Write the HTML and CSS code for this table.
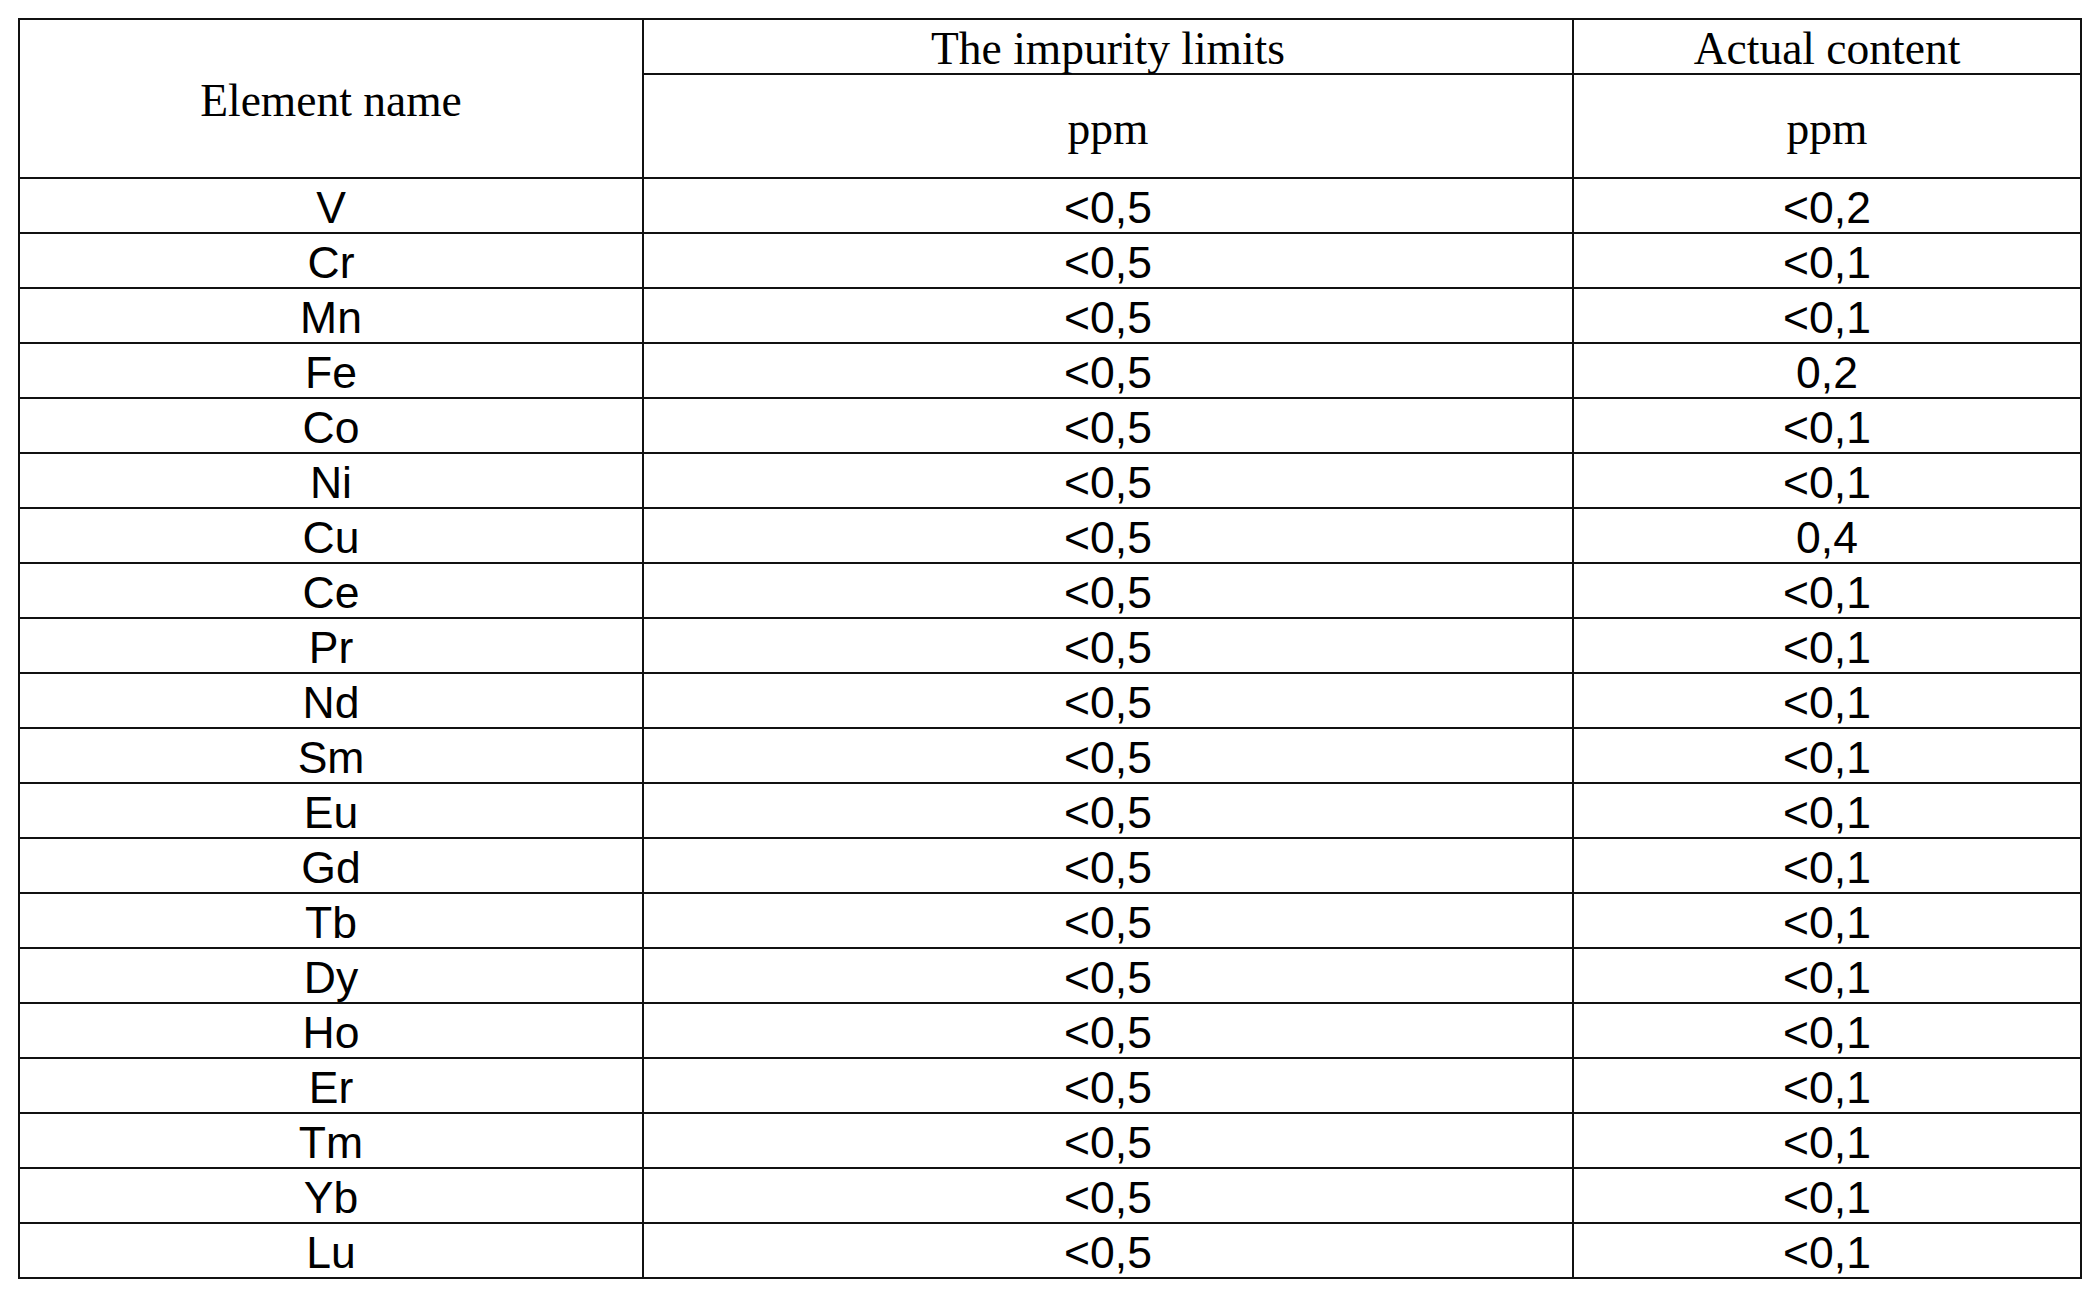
FILE: index.html
```html
<!DOCTYPE html>
<html>
<head>
<meta charset="utf-8">
<link rel="stylesheet" href="styles.css">
</head>
<body>
<table class="spec">
  <thead>
    <tr class="head-top">
      <th class="c1" rowspan="2">Element name</th>
      <th class="c2">The impurity limits</th>
      <th class="c3">Actual content</th>
    </tr>
    <tr class="head-unit">
      <th>ppm</th>
      <th>ppm</th>
    </tr>
  </thead>
  <tbody>
    <tr><td>V</td><td>&lt;0,5</td><td>&lt;0,2</td></tr>
    <tr><td>Cr</td><td>&lt;0,5</td><td>&lt;0,1</td></tr>
    <tr><td>Mn</td><td>&lt;0,5</td><td>&lt;0,1</td></tr>
    <tr><td>Fe</td><td>&lt;0,5</td><td>0,2</td></tr>
    <tr><td>Co</td><td>&lt;0,5</td><td>&lt;0,1</td></tr>
    <tr><td>Ni</td><td>&lt;0,5</td><td>&lt;0,1</td></tr>
    <tr><td>Cu</td><td>&lt;0,5</td><td>0,4</td></tr>
    <tr><td>Ce</td><td>&lt;0,5</td><td>&lt;0,1</td></tr>
    <tr><td>Pr</td><td>&lt;0,5</td><td>&lt;0,1</td></tr>
    <tr><td>Nd</td><td>&lt;0,5</td><td>&lt;0,1</td></tr>
    <tr><td>Sm</td><td>&lt;0,5</td><td>&lt;0,1</td></tr>
    <tr><td>Eu</td><td>&lt;0,5</td><td>&lt;0,1</td></tr>
    <tr><td>Gd</td><td>&lt;0,5</td><td>&lt;0,1</td></tr>
    <tr><td>Tb</td><td>&lt;0,5</td><td>&lt;0,1</td></tr>
    <tr><td>Dy</td><td>&lt;0,5</td><td>&lt;0,1</td></tr>
    <tr><td>Ho</td><td>&lt;0,5</td><td>&lt;0,1</td></tr>
    <tr><td>Er</td><td>&lt;0,5</td><td>&lt;0,1</td></tr>
    <tr><td>Tm</td><td>&lt;0,5</td><td>&lt;0,1</td></tr>
    <tr><td>Yb</td><td>&lt;0,5</td><td>&lt;0,1</td></tr>
    <tr><td>Lu</td><td>&lt;0,5</td><td>&lt;0,1</td></tr>
  </tbody>
</table>
</body>
</html>
```

FILE: styles.css
```css
html, body {
  margin: 0;
  padding: 0;
  background: #ffffff;
}

.spec {
  margin: 18px 0 0 18px;
  width: 2064px;
  border-collapse: separate;
  border-spacing: 0;
  table-layout: fixed;
  border-top: 2px solid #111;
  border-left: 2px solid #111;
  color: #000;
}

.spec th,
.spec td {
  box-sizing: border-box;
  padding: 0;
  border-right: 2px solid #111;
  border-bottom: 2px solid #111;
  text-align: center;
  vertical-align: middle;
}

.spec th {
  font-family: "Liberation Serif", "Times New Roman", serif;
  font-weight: normal;
  font-size: 45.5px;
  line-height: 46px;
}

.spec td {
  font-family: "Liberation Sans", Arial, sans-serif;
  font-size: 44.5px;
  line-height: 44px;
  height: 55px;
  padding-top: 4px;
}

.spec .c1 { width: 624px; }
.spec .c2 { width: 930px; }
.spec .c3 { width: 508px; }

.head-top th { height: 55px; padding-top: 5px; }
.head-top th.c1 { height: 159px; padding-top: 4px; }
.head-unit th { height: 104px; padding-top: 6px; }
```
